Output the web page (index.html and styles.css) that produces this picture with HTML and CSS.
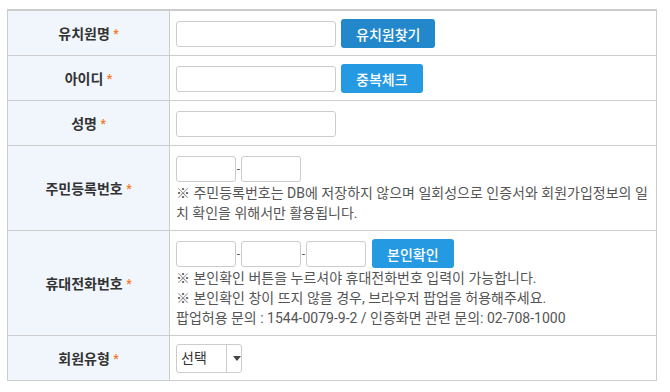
FILE: index.html
```html
<!DOCTYPE html>
<html lang="ko">
<head>
<meta charset="UTF-8">
<meta name="viewport" content="width=device-width, initial-scale=1.0">
<title>회원가입</title>
<link rel="stylesheet" href="styles.css">
</head>
<body>

<div class="join-form">
  <table class="form-table">
    <tr>
      <th>유치원명 <span class="req">*</span></th>
      <td>
        <div class="field-row">
          <input type="text" class="input-text">
          <button type="button" class="btn btn-dark">유치원찾기</button>
        </div>
      </td>
    </tr>
    <tr>
      <th>아이디 <span class="req">*</span></th>
      <td>
        <div class="field-row">
          <input type="text" class="input-text">
          <button type="button" class="btn">중복체크</button>
        </div>
      </td>
    </tr>
    <tr>
      <th>성명 <span class="req">*</span></th>
      <td>
        <div class="field-row">
          <input type="text" class="input-text">
        </div>
      </td>
    </tr>
    <tr>
      <th>주민등록번호 <span class="req">*</span></th>
      <td>
        <div class="field-row tight">
          <input type="text" class="input-short">
          <span class="dash">-</span>
          <input type="text" class="input-short">
        </div>
        <p class="note">※ 주민등록번호는 DB에 저장하지 않으며 일회성으로 인증서와 회원가입정보의 일치 확인을 위해서만 활용됩니다.</p>
      </td>
    </tr>
    <tr>
      <th>휴대전화번호 <span class="req">*</span></th>
      <td>
        <div class="field-row tight">
          <input type="text" class="input-short">
          <span class="dash">-</span>
          <input type="text" class="input-short">
          <span class="dash">-</span>
          <input type="text" class="input-short">
          <button type="button" class="btn btn-gap">본인확인</button>
        </div>
        <p class="note">※ 본인확인 버튼을 누르셔야 휴대전화번호 입력이 가능합니다.<br>
        ※ 본인확인 창이 뜨지 않을 경우, 브라우저 팝업을 허용해주세요.<br>
        팝업허용 문의 : 1544-0079-9-2 / 인증화면 관련 문의: 02-708-1000</p>
      </td>
    </tr>
    <tr>
      <th>회원유형 <span class="req">*</span></th>
      <td>
        <div class="field-row">
          <div class="select-box">
            <span class="select-text">선택</span>
            <span class="select-arrow"></span>
          </div>
        </div>
      </td>
    </tr>
  </table>
</div>

</body>
</html>
```

FILE: styles.css
```css
/* 회원가입 폼 */
body {
  margin: 0;
  background-color: #ffffff;
  font-family: Roboto, "Noto Sans CJK KR", sans-serif;
  font-size: 14px;
  color: #555555;
}

.join-form {
  padding: 9px 0 0 7px;
}

.form-table {
  width: 650px;
  border-collapse: collapse;
  border-top: 2px solid #cccccc;
}

.form-table th,
.form-table td {
  border: 1px solid #cccccc;
  padding: 8px 6px 7px;
  line-height: 20px;
}

.form-table th {
  width: 149px;
  background-color: #f1f6fd;
  color: #333333;
  font-weight: bold;
  text-align: center;
}

.req {
  color: #f5771f;
  font-size: 12px;
  vertical-align: 1px;
}

.field-row {
  display: flex;
  align-items: center;
  gap: 5px;
  height: 29px;
}

.field-row.tight {
  gap: 0;
}

input[type='text'] {
  height: 26px;
  border: 1px solid #cccccc;
  border-radius: 3px;
  box-sizing: border-box;
  padding: 0 5px;
  font-family: inherit;
  margin: 0;
}

.input-text {
  width: 160px;
}

.input-short {
  width: 60px;
}

.dash {
  width: 5px;
  text-align: center;
  color: #555555;
  font-size: 12px;
}

.btn {
  height: 29px;
  padding: 0 15px;
  border: none;
  border-radius: 3px;
  background-color: #2599e2;
  color: #ffffff;
  font-family: inherit;
  font-size: 14px;
  font-weight: 500;
  cursor: pointer;
}

.btn-dark {
  background-color: #2288cb;
}

.btn-gap {
  margin-left: 6px;
}

.note {
  margin: 0;
  color: #555555;
}

.select-box {
  display: flex;
  width: 66px;
  height: 29px;
  border: 1px solid #cccccc;
  border-radius: 3px;
  box-sizing: border-box;
  color: #333333;
}

.select-text {
  width: 45px;
  padding-left: 4px;
  line-height: 27px;
  border-right: 1px solid #cccccc;
}

.select-arrow {
  flex: 1;
  position: relative;
}

.select-arrow::after {
  content: "";
  position: absolute;
  left: 6px;
  top: 11px;
  border-left: 4px solid transparent;
  border-right: 4px solid transparent;
  border-top: 5px solid #444444;
}
```
